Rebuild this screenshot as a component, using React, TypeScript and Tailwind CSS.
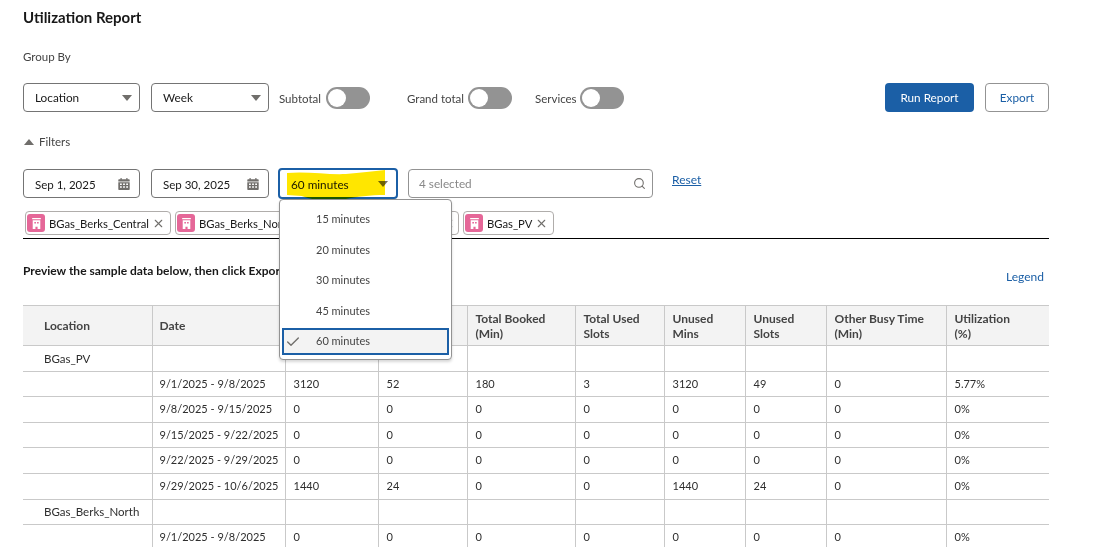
import { Check, Search, X } from "lucide-react";

const font = "font-['Lato',sans-serif]";

type Row = {
    location?: string;
    date?: string;
    cells?: string[];
};

const rows: Row[] = [
    { location: "BGas_PV" },
    { date: "9/1/2025 - 9/8/2025", cells: ["3120", "52", "180", "3", "3120", "49", "0", "5.77%"] },
    { date: "9/8/2025 - 9/15/2025", cells: ["0", "0", "0", "0", "0", "0", "0", "0%"] },
    { date: "9/15/2025 - 9/22/2025", cells: ["0", "0", "0", "0", "0", "0", "0", "0%"] },
    { date: "9/22/2025 - 9/29/2025", cells: ["0", "0", "0", "0", "0", "0", "0", "0%"] },
    { date: "9/29/2025 - 10/6/2025", cells: ["1440", "24", "0", "0", "1440", "24", "0", "0%"] },
    { location: "BGas_Berks_North" },
    { date: "9/1/2025 - 9/8/2025", cells: ["0", "0", "0", "0", "0", "0", "0", "0%"] },
];

const headers = [
    { label: "Total Mins", width: "w-[93px]" },
    { label: "Total Slots", width: "w-[89px]" },
    { label: "Total Booked (Min)", width: "w-[108px]" },
    { label: "Total Used Slots", width: "w-[89px]" },
    { label: "Unused Mins", width: "w-[81px]" },
    { label: "Unused Slots", width: "w-[81px]" },
    { label: "Other Busy Time (Min)", width: "w-[120px]" },
    { label: "Utilization (%)", width: "" },
];

function Caret() {
    return <span className="h-0 w-0 border-x-[5px] border-t-[6px] border-x-transparent border-t-[#706e6b]" />;
}

function Select({ label, width }: { label: string; width: string }) {
    return (
        <div className={`flex h-[29px] items-center justify-between rounded-[4px] border border-[#747474] bg-white pl-[11px] pr-[7px] text-[11.750px] text-[#181818] ${width}`}>
            <span className="pt-[1px]">{label}</span>
            <Caret />
        </div>
    );
}

function Toggle({ label, labelWidth, className }: { label: string; labelWidth: string; className: string }) {
    return (
        <div className={`flex items-center ${className}`}>
            <span className={`pt-[3px] text-[11.500px] text-[#444444] ${labelWidth}`}>{label}</span>
            <span className="flex h-[22px] w-[44px] items-center rounded-full bg-[#939393] pl-[2px]">
                <span className="h-[18px] w-[18px] rounded-full bg-white" />
            </span>
        </div>
    );
}

function CalendarIcon() {
    return (
        <svg viewBox="0 0 12 12" className="h-[12px] w-[12px]" fill="#706e6b">
            <path d="M2.500 0h1.200v1.200h4.600V0h1.200v1.200H11c.4 0 .7.3.7.7v1.500H.3V1.900c0-.4.3-.7.7-.7h1.500z" />
            <path
                fillRule="evenodd"
                d="M.3 4.200h11.400v7c0 .4-.3.7-.7.7H1c-.4 0-.7-.3-.7-.7zM2 5.500v1.500h1.800V5.500zM5.100 5.500v1.500h1.800V5.500zM8.200 5.500v1.500H10V5.500zM2 8.300v1.500h1.800V8.300zM5.100 8.300v1.500h1.800V8.300zM8.200 8.300v1.500H10V8.300z"
            />
        </svg>
    );
}

function DateInput({ label, width }: { label: string; width: string }) {
    return (
        <div className={`flex h-[29px] items-center justify-between rounded-[4px] border border-[#747474] bg-white pl-[11px] pr-[9px] text-[11.500px] text-[#181818] ${width}`}>
            <span className="pt-[2px]">{label}</span>
            <CalendarIcon />
        </div>
    );
}

function Chip({ label, width }: { label: string; width: string }) {
    return (
        <div className={`flex h-[24px] shrink-0 items-center rounded-[4px] border border-[#b0adab] bg-white pl-[1px] pr-[6px] text-[11.250px] text-[#181818] ${width}`}>
            <span className="mr-[4px] flex h-[18px] w-[18px] shrink-0 items-center justify-center rounded-[3px] bg-[#e56798]">
                <svg viewBox="0 0 12 12" className="h-[13px] w-[13px]" fill="white">
                    <path d="M2 1h8v1H2zM2.500 3h7v8H7V9H5v2H2.500zM4 4.500v1.500h1.500V4.500zM6.500 4.500v1.500H8V4.500z" fillRule="evenodd" />
                </svg>
            </span>
            <span className="flex-1 whitespace-nowrap pt-[2px]">{label}</span>
            <X size={13} className="ml-[3px] shrink-0 text-[#706e6b]" />
        </div>
    );
}

function Dropdown() {
    const options = ["15 minutes", "20 minutes", "30 minutes", "45 minutes"];
    return (
        <div className="absolute left-[1px] top-[31px] z-10 w-[173px] rounded-[4px] border border-[#939393] bg-white px-[2px] pb-[4px] pt-[4px] text-[11px] text-[#444444] shadow-[0_2px_3px_rgba(0,0,0,0.16)]">
            {options.map((option) => (
                <div key={option} className="flex h-[30.500px] items-center pl-[34px]">
                    {option}
                </div>
            ))}
            <div className="mt-[2px] flex h-[27px] items-center border-2 border-[#1b5fa6] bg-[#f3f3f3] pl-[1px]">
                <Check size={16} className="mr-[15px] text-[#706e6b]" />
                60 minutes
            </div>
        </div>
    );
}

function Highlight() {
    return (
        <svg viewBox="0 0 100 32" preserveAspectRatio="none" className="pointer-events-none absolute left-[9px] top-[2px] h-[32px] w-[98px] mix-blend-multiply">
            <path d="M0 3 C20 1 42 5 60 4 C75 3 88 1 100 0 L100 25 C85 25 70 27 60 29 C45 32 28 31 15 26 L0 25 Z" fill="#ffe600" />
        </svg>
    );
}

export default function App() {
    return (
        <div className={`h-[547px] w-[1117px] overflow-hidden bg-white pl-[23px] pr-[68px] ${font}`}>
            <h1 className="pt-[9px] text-[15px] font-bold leading-[17px] text-[#181818]">Utilization Report</h1>
            <p className="mt-[22px] text-[11.500px] leading-[17px] text-[#444444]">Group By</p>

            <div className="mt-[18px] flex items-center">
                <Select label="Location" width="w-[117px]" />
                <Select label="Week" width="ml-[11px] w-[118px]" />
                <Toggle label="Subtotal" labelWidth="w-[47px]" className="ml-[10px]" />
                <Toggle label="Grand total" labelWidth="w-[61px]" className="ml-[37px]" />
                <Toggle label="Services" labelWidth="w-[45px]" className="ml-[23px]" />
                <button className="ml-auto h-[29px] w-[89px] rounded-[4px] bg-[#1b5fa6] pt-[1px] text-[11.750px] text-white">Run Report</button>
                <button className="ml-[11px] h-[29px] w-[64px] rounded-[4px] border border-[#939393] bg-white pt-[1px] text-[11.750px] text-[#1b5fa6]">Export</button>
            </div>

            <div className="mt-[21px] flex items-center text-[11.500px] leading-[17px] text-[#444444]">
                <span className="mr-[5px] ml-[1px] h-0 w-0 border-x-[5px] border-b-[6px] border-x-transparent border-b-[#706e6b]" />
                Filters
            </div>

            <div className="mt-[18px] flex items-center">
                <DateInput label="Sep 1, 2025" width="w-[117px]" />
                <DateInput label="Sep 30, 2025" width="ml-[11px] w-[118px]" />
                <div className="relative ml-[9px] h-[31px] w-[120px]">
                    <div className="flex h-full items-center justify-between rounded-[4px] border-2 border-[#1b5fa6] bg-white pl-[11px] pr-[8px] text-[11.750px] text-[#181818]">
                        <span className="pt-[2px]">60 minutes</span>
                        <Caret />
                    </div>
                    <Highlight />
                    <Dropdown />
                </div>
                <div className="ml-[10px] flex h-[29px] w-[245px] items-center justify-between rounded-[4px] border border-[#939393] bg-white pl-[10px] pr-[6px] text-[11.750px] text-[#888888]">
                    <span className="pt-[1px]">4 selected</span>
                    <Search size={13} className="text-[#706e6b]" />
                </div>
                <a className="ml-[19px] self-start pt-[3px] text-[12px] text-[#1b5fa6] underline">Reset</a>
            </div>

            <div className="mt-[12px] flex gap-[4px] pl-[2px]">
                <Chip label="BGas_Berks_Central" width="w-[146px]" />
                <Chip label="BGas_Berks_North" width="w-[143px]" />
                <Chip label="BGas_Berks_South" width="w-[137px]" />
                <Chip label="BGas_PV" width="w-[91px]" />
            </div>
            <div className="mt-[3px] h-px bg-black" />

            <div className="relative">
                <p className="pt-[23px] text-[12px] font-bold leading-[17px] text-[#181818]">Preview the sample data below, then click Export to download the full report.</p>
                <a className="absolute right-[5px] top-[29px] text-[12px] leading-[17px] text-[#1b5fa6]">Legend</a>
            </div>

            <table className="mt-[26px] w-[1026px] table-fixed border-collapse text-[11px] text-[#2e2e2e]">
                <thead>
                    <tr className="h-[40px] border-y border-[#c9c9c9] bg-[#f3f3f3] text-left align-middle text-[12px] leading-[15px] text-[#444444]">
                        <th className="w-[129px] pl-[21px] font-bold">Location</th>
                        <th className="w-[133px] border-l border-[#c9c9c9] pl-[7px] font-bold">Date</th>
                        {headers.map((header) => (
                            <th key={header.label} className={`border-l border-[#c9c9c9] pl-[8px] pr-[20px] font-bold ${header.width}`}>
                                {header.label}
                            </th>
                        ))}
                    </tr>
                </thead>
                <tbody>
                    {rows.map((row, rowIndex) => (
                        <tr key={rowIndex} className="h-[25.600px] border-b border-[#c9c9c9]">
                            <td className="whitespace-nowrap pl-[21px] text-[11.500px]">{row.location}</td>
                            <td className="whitespace-nowrap border-l border-[#c9c9c9] pl-[7px]">{row.date}</td>
                            {headers.map((header, cellIndex) => (
                                <td key={header.label} className="border-l border-[#c9c9c9] pl-[8px]">
                                    {row.cells?.[cellIndex]}
                                </td>
                            ))}
                        </tr>
                    ))}
                </tbody>
            </table>
        </div>
    );
}
